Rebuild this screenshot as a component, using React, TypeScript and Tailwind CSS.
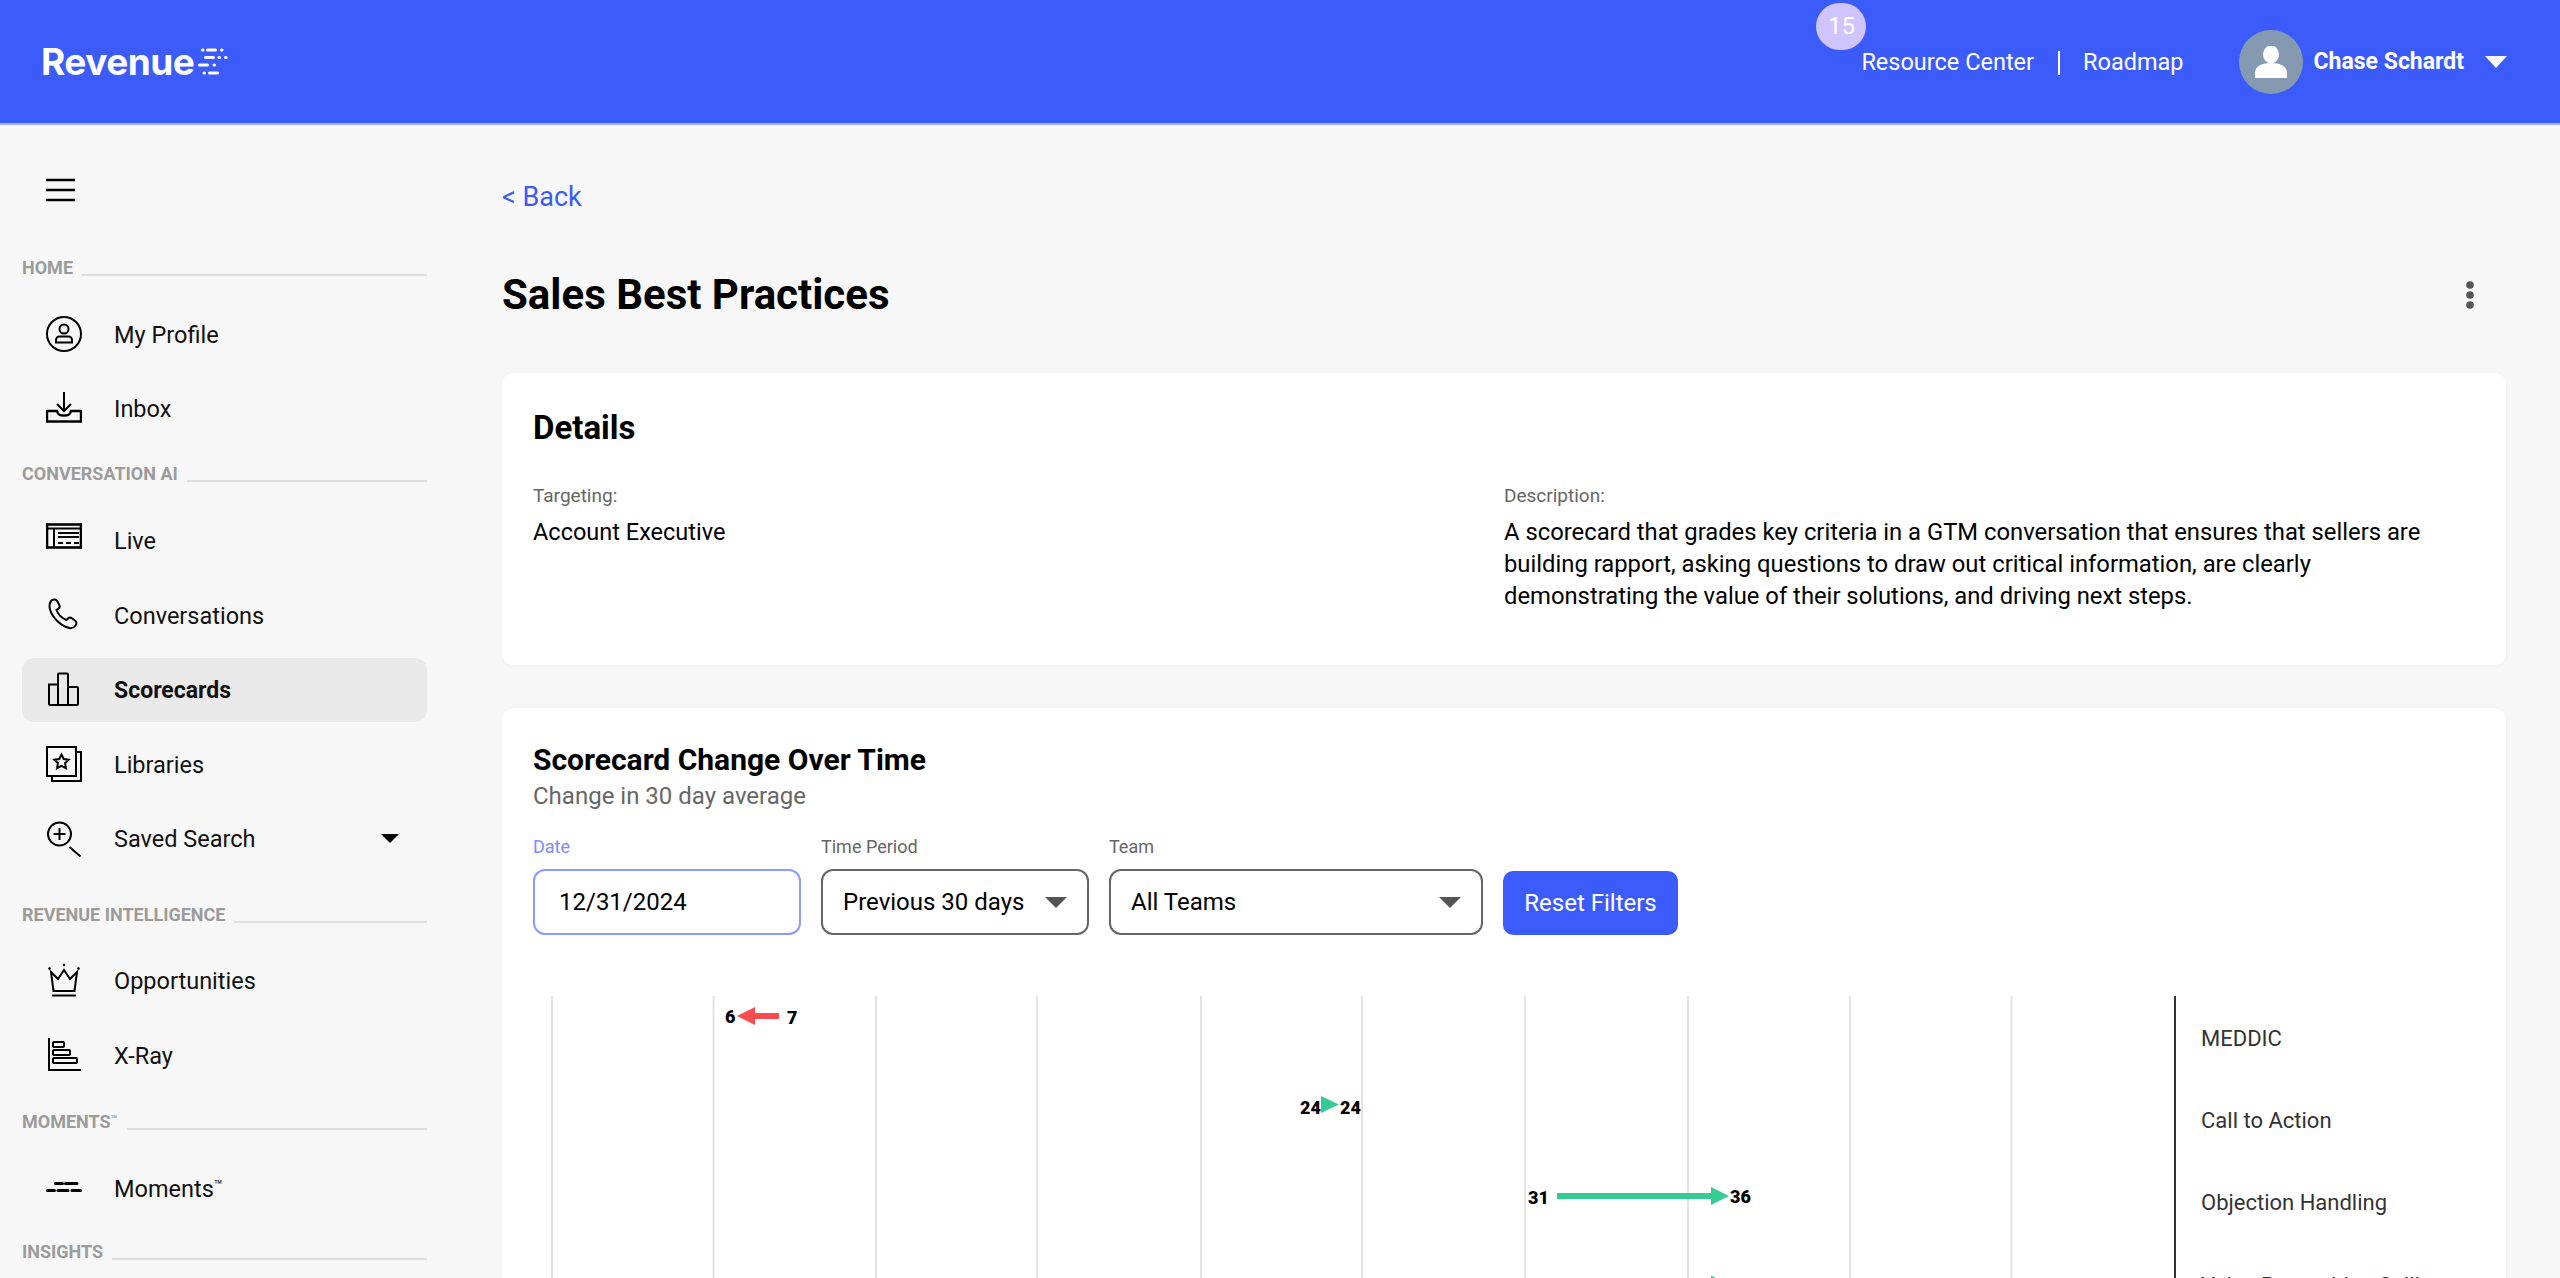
import React from "react";

const font = { fontFamily: 'Roboto, "Noto Sans", sans-serif' };

function Icon({ children, w = 36, h = 36 }: { children: React.ReactNode; w?: number; h?: number }) {
  return (
    <svg width={w} height={h} viewBox="0 0 36 36" fill="none" stroke="#000" strokeWidth="2" className="shrink-0">
      {children}
    </svg>
  );
}

const icons: Record<string, React.ReactNode> = {
  profile: (
    <>
      <circle cx="18" cy="18" r="17" />
      <circle cx="18" cy="13" r="4.500" />
      <path d="M10 26.500v-2.500a3.500 3.500 0 0 1 3.500-3.500h9a3.500 3.500 0 0 1 3.500 3.500v2.500z" />
    </>
  ),
  inbox: (
    <>
      <path d="M18 1v18M11 13l7 7 7-7" />
      <path d="M11 20H1v10.500h34V20H25c-1 4-3 4.500-7 4.500S12 24 11 20z" strokeWidth="2.400" />
    </>
  ),
  live: (
    <>
      <rect x="1" y="1.500" width="34" height="23" strokeWidth="2.600" />
      <path d="M1 5.500h34M8 5.500v19M12 10h21M12 14h21M12 20h5M20 20h5M28 20h5" strokeWidth="2" />
    </>
  ),
  phone: (
    <path d="M5.500 3.500c2.500-2 5-1 6 1l2 4c.5 1.500 0 2.500-1.500 3.500l-1.500 1c1.500 4 5 8 10 10l1.500-1.500c1-1 2.500-1 3.500-.5l3.500 2.500c1.500 1 2 3 .5 5-1.500 2-3.500 3-6 2.500C15 29 6.500 21 4 12.500c-.8-3.500-.5-7 1.500-9z" strokeWidth="2" />
  ),
  bars: (
    <path d="M3 12.500h9V33H4a1 1 0 0 1-1-1zM12 2.500a1 1 0 0 1 1-1h8a1 1 0 0 1 1 1V33H12zM22 15h9a1 1 0 0 1 1 1v16a1 1 0 0 1-1 1h-9z" />
  ),
  lib: (
    <>
      <rect x="1" y="1" width="29" height="29" strokeWidth="2" />
      <path d="M30 6h5v29H6v-5" strokeWidth="2" />
      <path d="M15.500 8.500l2.200 4.500 5 .7-3.600 3.400.8 5-4.400-2.300-4.400 2.300.8-5-3.600-3.400 5-.7z" strokeWidth="2" />
    </>
  ),
  search: (
    <>
      <circle cx="13.500" cy="13" r="11.500" />
      <path d="M13.500 7v12M7.500 13h12M23.500 26l11 9.500" />
    </>
  ),
  crown: (
    <>
      <path d="M5 9l7 7 6-9 6 9 7-7-2.500 19h-21z" strokeWidth="2" />
      <path d="M6 32.500h24" />
      <circle cx="18" cy="2" r="1.300" fill="#000" stroke="none" />
      <circle cx="3.500" cy="5.500" r="1.300" fill="#000" stroke="none" />
      <circle cx="32.500" cy="5.500" r="1.300" fill="#000" stroke="none" />
    </>
  ),
  xray: (
    <>
      <path d="M3 1v32h32" strokeWidth="2" />
      <rect x="7" y="5" width="11" height="5" rx="1" />
      <rect x="7" y="13" width="17" height="5" rx="1" />
      <rect x="7" y="21" width="24" height="5" rx="1" />
    </>
  ),
  moments: (
    <path d="M9.500 13.500h7M19.500 13.500h11.500M1.500 20.500h7M12 20.500h10M26 20.500h8.500" strokeWidth="3" strokeLinecap="round" />
  ),
};

function Section({ label, sup, className = "" }: { label: string; sup?: boolean; className?: string }) {
  return (
    <div className={"flex items-center h-[20px] gap-[9px] " + className}>
      <span className="text-[18px] font-bold text-[#9b9b9b] leading-none whitespace-nowrap">
        {label}
        {sup && <sup className="text-[11px]">™</sup>}
      </span>
      <div className="flex-1 h-[2px] bg-[#dedede] mt-[14px]" />
    </div>
  );
}

function Item({ icon, label, active, caret, sup }: { icon: string; label: string; active?: boolean; caret?: boolean; sup?: boolean }) {
  return (
    <div className={"flex items-center h-[64px] pl-[24px] pr-[24px] rounded-[12px] mt-[10.500px] first:mt-0 " + (active ? "bg-[#e9e9e9]" : "")}>
      <Icon>{icons[icon]}</Icon>
      <span className={"ml-[32px] pt-[3px] text-[#111] flex-1 whitespace-nowrap " + (active ? "text-[23px] font-bold" : "text-[23.500px]")}>
        {label}
        {sup && <sup className="text-[14px]">™</sup>}
      </span>
      {caret && <div className="w-0 h-0 border-x-[9px] border-x-transparent border-t-[9px] border-t-black mr-[4px]" />}
    </div>
  );
}

function Select({ label, value, width }: { label: string; value: string; width: string }) {
  return (
    <div className={"flex flex-col " + width}>
      <span className="text-[18px] leading-[20px] text-[#666] mb-[12px]">{label}</span>
      <div className="h-[66px] rounded-[12px] border-2 border-[#666] flex items-center pl-[20px] pr-[20px] justify-between">
        <span className="text-[24px] text-black whitespace-nowrap">{value}</span>
        <div className="w-0 h-0 border-x-[11px] border-x-transparent border-t-[11px] border-t-[#555]" />
      </div>
    </div>
  );
}

function Chart() {
  const grid = [552, 713.5, 876, 1037, 1201, 1362, 1525, 1688, 1850, 2011.5].map((x) => x - 533);
  const ax = 2175 - 533;
  const num = { fontSize: 18, fontWeight: 900, fill: "#000", fontFamily: "Roboto, sans-serif" };
  const lab = { fontSize: 22, fill: "#333", fontFamily: "Roboto, sans-serif" };
  return (
    <svg width="1942" height="290" viewBox="0 0 1942 290" className="block mt-[61px]">
      {grid.map((x) => (
        <line key={x} x1={x} x2={x} y1="0" y2="290" stroke="#e3e3e3" strokeWidth="2" />
      ))}
      <line x1={ax} x2={ax} y1="0" y2="290" stroke="#333" strokeWidth="2" />
      <g transform="translate(0,-997)">
        <text x="192" y="1023.500" {...num}>6</text>
        <text x="254" y="1024.500" {...num}>7</text>
        <path d="M246 1014h-24v-6l-18 9 18 9v-6h24z" fill="#fb4b4e" />
        <text x="767" y="1115" {...num}>24</text>
        <text x="807" y="1115" {...num}>24</text>
        <path d="M788 1097l18 8.500-18 8.500z" fill="#33cc95" />
        <text x="995" y="1204.500" {...num}>31</text>
        <path d="M1024 1194h154v-6l18 9-18 9v-6h-154z" fill="#33cc95" />
        <text x="1197" y="1203.500" {...num}>36</text>
        <path d="M1178 1276.500l18 9-18 9z" fill="#33cc95" />
        <text x="1668" y="1047" {...lab}>MEDDIC</text>
        <text x="1668" y="1129" {...lab}>Call to Action</text>
        <text x="1668" y="1211" {...lab}>Objection Handling</text>
        <text x="1668" y="1294" {...lab}>Value Proposition Selling</text>
      </g>
    </svg>
  );
}

export default function App() {
  return (
    <div className="h-screen overflow-hidden flex flex-col bg-[#f7f7f7]" style={font}>
      <header className="h-[125px] shrink-0 bg-[#3b5bfb] border-b-2 border-[#9fb0ff] flex items-center pl-[41px] pr-[53px]">
        <span className="text-[37px] font-bold text-white leading-none tracking-[-0.5px]" style={{ fontFamily: "Inter, sans-serif" }}>
          Revenue
        </span>
        <svg width="30" height="28" viewBox="0 0 30 28" className="ml-[4px]" fill="#fff">
          <rect x="3" y="0.500" width="3.500" height="3" rx="1.500" />
          <rect x="8" y="0.500" width="11" height="3" rx="1.500" />
          <rect x="22" y="0.500" width="3.500" height="3" rx="1.500" />
          <rect x="6" y="8" width="11" height="3" rx="1.500" />
          <rect x="19.500" y="8" width="3.500" height="3" rx="1.500" />
          <rect x="26" y="8" width="3.500" height="3" rx="1.500" />
          <rect x="0" y="15.500" width="11" height="3" rx="1.500" />
          <rect x="14.500" y="15.500" width="3.500" height="3" rx="1.500" />
          <rect x="4.500" y="23.500" width="3.500" height="3" rx="1.500" />
          <rect x="10" y="23.500" width="11" height="3" rx="1.500" />
        </svg>
        <div className="flex-1" />
        <div className="relative flex items-center text-[23.500px] text-white pt-[2px]">
          <div className="absolute -left-[45px] -top-[40px] w-[50px] h-[47px] rounded-full bg-[#cfc4ff] flex items-center justify-center text-[24px] text-white">15</div>
          <span>Resource Center</span>
          <div className="w-[2px] h-[24px] bg-white ml-[24px] mr-[23px]" />
          <span>Roadmap</span>
        </div>
        <div className="ml-[55px] w-[64px] h-[64px] rounded-full bg-[#859ab0] flex items-center justify-center">
          <svg width="32" height="32" viewBox="0 0 32 32" fill="#fff">
            <ellipse cx="16" cy="8.500" rx="8" ry="9" />
            <path d="M0 32v-5c0-7 7-10 16-10s16 3 16 10v5z" />
          </svg>
        </div>
        <span className="ml-[11px] pt-[2px] text-[23px] font-bold text-white whitespace-nowrap">Chase Schardt</span>
        <div className="ml-[21px] w-0 h-0 border-x-[11px] border-x-transparent border-t-[12px] border-t-white" />
      </header>
      <div className="flex flex-1 min-h-0">
        <aside className="w-[502px] shrink-0 pl-[22px] overflow-hidden">
          <div className="w-[405px]">
            <div className="pl-[24px] pt-[53px]">
              <svg width="30" height="24" viewBox="0 0 30 24" stroke="#000" strokeWidth="2.500" className="block">
                <path d="M0 2h29M0 12h29M0 22h29" />
              </svg>
            </div>
            <Section label="HOME" className="mt-[56px]" />
            <div className="mt-[24px]">
              <Item icon="profile" label="My Profile" />
              <Item icon="inbox" label="Inbox" />
            </div>
            <Section label="CONVERSATION AI" className="mt-[23px]" />
            <div className="mt-[25px]">
              <Item icon="live" label="Live" />
              <Item icon="phone" label="Conversations" />
              <Item icon="bars" label="Scorecards" active />
              <Item icon="lib" label="Libraries" />
              <Item icon="search" label="Saved Search" caret />
            </div>
            <Section label="REVENUE INTELLIGENCE" className="mt-[34px]" />
            <div className="mt-[24px]">
              <Item icon="crown" label="Opportunities" />
              <Item icon="xray" label="X-Ray" />
            </div>
            <Section label="MOMENTS" sup className="mt-[25px]" />
            <div className="mt-[24px]">
              <Item icon="moments" label="Moments" sup />
            </div>
            <Section label="INSIGHTS" className="mt-[22px]" />
          </div>
        </aside>
        <main className="flex-1 min-w-0 pr-[54px] overflow-hidden">
          <div className="text-[27px] leading-[36px] text-[#3b5bfb] mt-[54px]">&lt; Back</div>
          <div className="flex items-center justify-between mt-[52px] pr-[32px]">
            <h1 className="text-[42px] leading-[56px] font-bold text-black">Sales Best Practices</h1>
            <svg width="8" height="28" viewBox="0 0 8 28" fill="#555">
              <circle cx="4" cy="4" r="3.800" />
              <circle cx="4" cy="14" r="3.800" />
              <circle cx="4" cy="24" r="3.800" />
            </svg>
          </div>
          <section className="mt-[50px] h-[292px] rounded-[12px] bg-white shadow-[0_0_6px_rgba(0,0,0,0.04)] px-[31px] pt-[33px]">
            <h2 className="text-[33px] leading-[44px] font-bold text-black">Details</h2>
            <div className="grid grid-cols-[971px_1fr] mt-[34px]">
              <div>
                <div className="text-[19px] leading-[24px] text-[#666]">Targeting:</div>
                <div className="text-[23.500px] leading-[32px] text-black mt-[8px]">Account Executive</div>
              </div>
              <div>
                <div className="text-[19px] leading-[24px] text-[#666]">Description:</div>
                <div className="text-[23.800px] leading-[32px] text-black mt-[8px] w-[960px]">
                  A scorecard that grades key criteria in a GTM conversation that ensures that sellers are building rapport, asking questions to draw out critical information, are clearly demonstrating the value of their solutions, and driving next steps.
                </div>
              </div>
            </div>
          </section>
          <section className="mt-[43px] rounded-[12px] bg-white shadow-[0_0_6px_rgba(0,0,0,0.04)] px-[31px] pt-[32px] h-[700px]">
            <h2 className="text-[30px] leading-[40px] font-bold text-black">Scorecard Change Over Time</h2>
            <div className="text-[24px] leading-[32px] text-[#666]">Change in 30 day average</div>
            <div className="flex items-end gap-[20px] mt-[25px]">
              <div className="flex flex-col w-[268px]">
                <span className="text-[18px] leading-[20px] text-[#7d8cff] mb-[12px]">Date</span>
                <div className="h-[66px] rounded-[12px] border-2 border-[#8b9bff] flex items-center pl-[24px]">
                  <span className="text-[24px] text-black">12/31/2024</span>
                </div>
              </div>
              <Select label="Time Period" value="Previous 30 days" width="w-[268px]" />
              <Select label="Team" value="All Teams" width="w-[374px]" />
              <button className="h-[64px] w-[175px] rounded-[10px] bg-[#3b5bfb] text-white text-[24px] whitespace-nowrap">Reset Filters</button>
            </div>
            <Chart />
          </section>
        </main>
      </div>
    </div>
  );
}
